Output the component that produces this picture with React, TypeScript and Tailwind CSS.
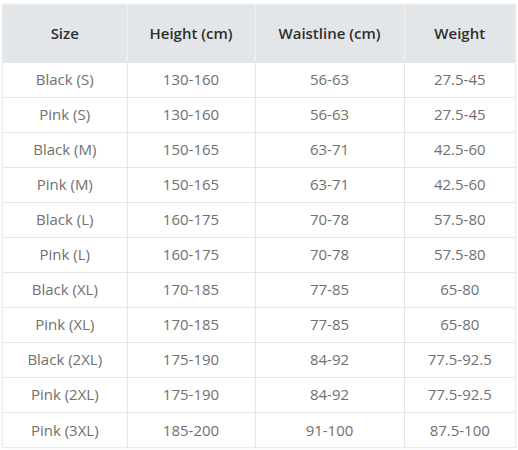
import React from "react";

const rows = [
  ["Black (S)", "130-160", "56-63", "27.5-45"],
  ["Pink (S)", "130-160", "56-63", "27.5-45"],
  ["Black (M)", "150-165", "63-71", "42.5-60"],
  ["Pink (M)", "150-165", "63-71", "42.5-60"],
  ["Black (L)", "160-175", "70-78", "57.5-80"],
  ["Pink (L)", "160-175", "70-78", "57.5-80"],
  ["Black (XL)", "170-185", "77-85", "65-80"],
  ["Pink (XL)", "170-185", "77-85", "65-80"],
  ["Black (2XL)", "175-190", "84-92", "77.5-92.5"],
  ["Pink (2XL)", "175-190", "84-92", "77.5-92.5"],
  ["Pink (3XL)", "185-200", "91-100", "87.5-100"],
];

const headers = ["Size", "Height (cm)", "Waistline (cm)", "Weight"];

export default function App() {
  return (
    <div className="w-[518px] h-[450px] bg-white pt-[4px] pl-[2px]">
      <div className="w-[514px] border border-[#ececec] shadow-[0_0_2px_rgba(0,0,0,0.08)]">
        <table className="w-full table-fixed border-collapse font-['Open_Sans',sans-serif]">
          <colgroup>
            <col className="w-[124px]" />
            <col className="w-[128px]" />
            <col className="w-[149px]" />
            <col />
          </colgroup>
          <thead>
            <tr className="h-[57px] bg-[#e3e6e8]">
              {headers.map((h, i) => (
                <th
                  key={h}
                  className={`text-[15px] font-semibold text-[#2e2e2e] text-center ${i > 0 ? "border-l border-[#f0f1f2]" : ""}`}
                >
                  {h}
                </th>
              ))}
            </tr>
          </thead>
          <tbody>
            {rows.map((r, ri) => (
              <tr key={ri} className="h-[35px] border-t border-[#e6e6e6]">
                {r.map((c, ci) => (
                  <td
                    key={ci}
                    className={`text-[15px] text-[#707070] text-center ${ci > 0 ? "border-l border-[#e6e6e6]" : ""}`}
                  >
                    {c}
                  </td>
                ))}
              </tr>
            ))}
          </tbody>
        </table>
      </div>
    </div>
  );
}
